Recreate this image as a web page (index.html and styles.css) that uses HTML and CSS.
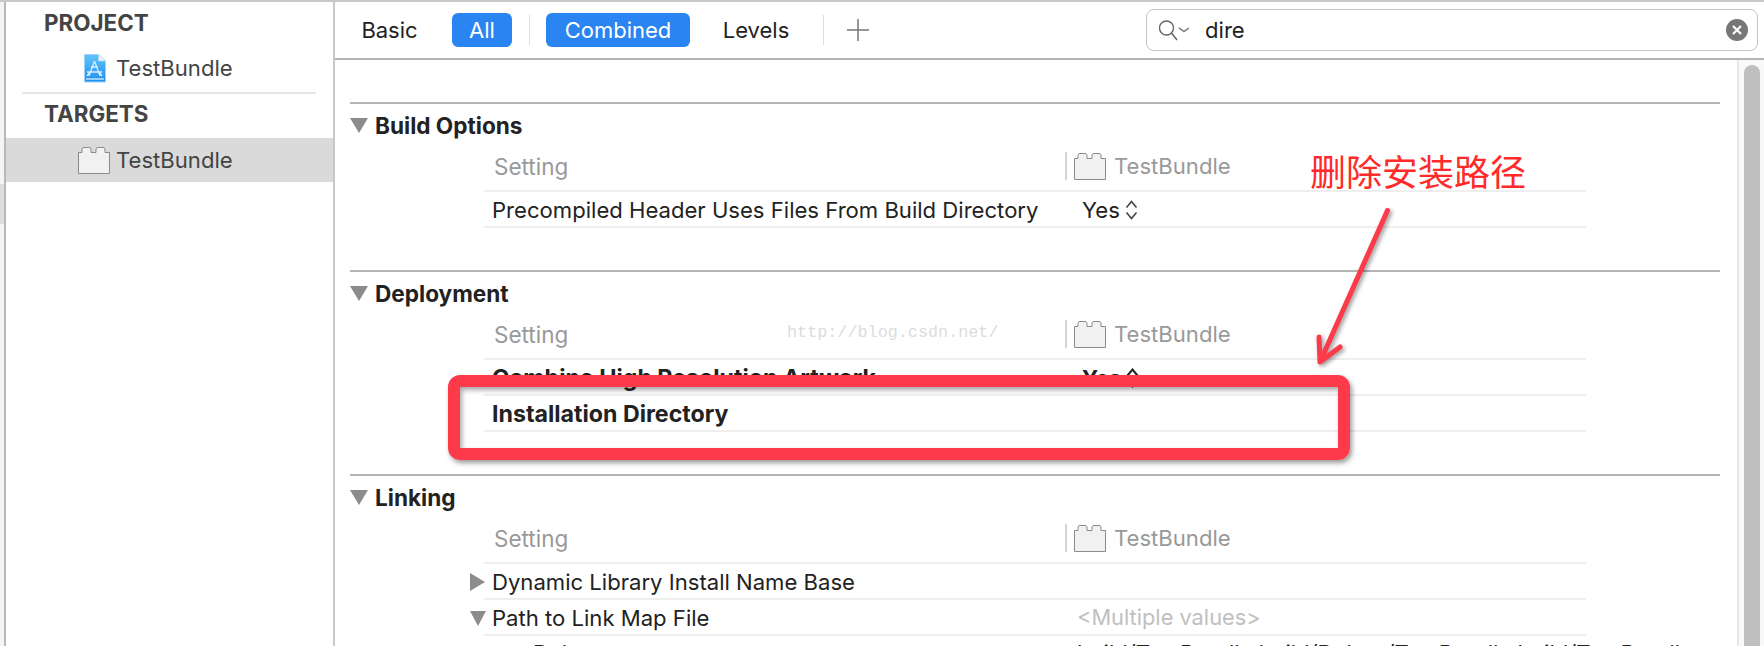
FILE: index.html
```html
<!DOCTYPE html>
<html lang="en">
<head>
<meta charset="utf-8">
<title>Build Settings</title>
<link rel="stylesheet" href="styles.css">
</head>
<body>
<div class="window">
  <div class="strip"></div>
  <aside class="sidebar">
    <div class="side-head first">PROJECT</div>
    <div class="side-item project">
      <svg class="doc-icon" viewBox="0 0 23 29" width="23" height="29">
        <defs><linearGradient id="docfill" x1="0" y1="0" x2="0" y2="1"><stop offset="0" stop-color="#62c4fa"/><stop offset="1" stop-color="#1c8ff0"/></linearGradient></defs>
        <path d="M1.500 .5H15.500L22.500 7V28H1.500Z" fill="url(#docfill)" stroke="#9ed2f3"/>
        <path d="M15.500 .5V7H22.500Z" fill="#eef4f9" stroke="#b9d6ea" stroke-width=".6"/>
        <path d="M3 25H21" stroke="#e4f4ff" stroke-width="1.200"/>
        <path d="M11.500 7L6 22M11.500 7L17 22M4 18H19M8 13H15M4 22L7 18M19 22L16 18" stroke="#d6eeff" stroke-width="1.300" fill="none"/>
      </svg>
      <span>TestBundle</span>
    </div>
    <div class="side-sep"></div>
    <div class="side-head second">TARGETS</div>
    <div class="side-item selected">
      <svg class="brick" viewBox="0 0 32 27" width="32" height="27">
        <path d="M.5 26.500V5.500H4V2L5 .5H12L13 2V5.500H18V2L19 .5H26L27 2V5.500H31.500V26.500Z" fill="#f1f1f1" stroke="#8a8a8a"/>
      </svg>
      <span>TestBundle</span>
    </div>
  </aside>
  <main class="main">
    <header class="toolbar">
      <span class="tab basic">Basic</span>
      <span class="tab on all">All</span>
      <span class="tool-sep first-sep"></span>
      <span class="tab on combined">Combined</span>
      <span class="tab levels">Levels</span>
      <span class="tool-sep second-sep"></span>
      <svg class="plus" viewBox="0 0 22 22" width="22" height="22"><path d="M11 0V22M0 11H22" stroke="#777" stroke-width="1.500"/></svg>
      <div class="search">
        <svg class="lens" viewBox="0 0 30 21" width="30" height="21">
          <circle cx="7.500" cy="8" r="7" fill="none" stroke="#666" stroke-width="1.400"/>
          <path d="M12.500 13L18 20" stroke="#666" stroke-width="1.500"/>
          <path d="M20 8L25 11.500L30 8" stroke="#666" stroke-width="1.300" fill="none"/>
        </svg>
        <span class="query">dire</span>
        <svg class="clear" viewBox="0 0 22 22" width="22" height="22">
          <circle cx="11" cy="11" r="11" fill="#777"/>
          <path d="M7 7L15 15M15 7L7 15" stroke="#fff" stroke-width="2.200"/>
        </svg>
      </div>
    </header>
    <div class="body">
      <div class="content">
        <section class="group">
          <h2 class="group-title"><i class="tri down"></i>Build Options</h2>
          <div class="row head">
            <div class="name">Setting</div>
            <div class="col-target">
              <svg class="brick" viewBox="0 0 32 27" width="32" height="27"><path d="M.5 26.500V5.500H4V2L5 .5H12L13 2V5.500H18V2L19 .5H26L27 2V5.500H31.500V26.500Z" fill="#f1f1f1" stroke="#8a8a8a"/></svg>
              <span>TestBundle</span>
            </div>
          </div>
          <div class="row">
            <div class="name">Precompiled Header Uses Files From Build Directory</div>
            <div class="value">Yes<svg class="updown" viewBox="0 0 13 20" width="13" height="20"><path d="M1.500 7.500L6.500 1.500L11.500 7.500M1.500 12.500L6.500 18.500L11.500 12.500" fill="none" stroke="#444" stroke-width="1.600"/></svg></div>
          </div>
        </section>
        <section class="group">
          <h2 class="group-title"><i class="tri down"></i>Deployment</h2>
          <div class="row head">
            <div class="name">Setting</div>
            <div class="col-target">
              <svg class="brick" viewBox="0 0 32 27" width="32" height="27"><path d="M.5 26.500V5.500H4V2L5 .5H12L13 2V5.500H18V2L19 .5H26L27 2V5.500H31.500V26.500Z" fill="#f1f1f1" stroke="#8a8a8a"/></svg>
              <span>TestBundle</span>
            </div>
          </div>
          <div class="row strong">
            <div class="name">Combine High Resolution Artwork</div>
            <div class="value">Yes<svg class="updown" viewBox="0 0 13 20" width="13" height="20"><path d="M1.500 7.500L6.500 1.500L11.500 7.500M1.500 12.500L6.500 18.500L11.500 12.500" fill="none" stroke="#222" stroke-width="2"/></svg></div>
          </div>
          <div class="row strong">
            <div class="name">Installation Directory</div>
            <div class="value"></div>
          </div>
        </section>
        <section class="group">
          <h2 class="group-title"><i class="tri down"></i>Linking</h2>
          <div class="row head">
            <div class="name">Setting</div>
            <div class="col-target">
              <svg class="brick" viewBox="0 0 32 27" width="32" height="27"><path d="M.5 26.500V5.500H4V2L5 .5H12L13 2V5.500H18V2L19 .5H26L27 2V5.500H31.500V26.500Z" fill="#f1f1f1" stroke="#8a8a8a"/></svg>
              <span>TestBundle</span>
            </div>
          </div>
          <div class="row">
            <div class="name"><i class="tri right small"></i>Dynamic Library Install Name Base</div>
            <div class="value"></div>
          </div>
          <div class="row">
            <div class="name"><i class="tri down small"></i>Path to Link Map File</div>
            <div class="value muted">&lt;Multiple values&gt;</div>
          </div>
          <div class="row last">
            <div class="name sub">Debug</div>
            <div class="value plain">build/TestBundle.build/Debug/TestBundle.build/TestBundle</div>
          </div>
        </section>
      </div>
      <div class="scroll"><div class="thumb"></div></div>
    </div>
  </main>
</div>
<div class="watermark">http://blog.csdn.net/</div>
<div class="callout"></div>
<div class="note">删除安装路径</div>
<svg class="arrow" viewBox="0 0 90 170" width="90" height="170">
  <path d="M74.500 5.500L7 157M6 132L7 157L27 142" fill="none" stroke="#fc3a4a" stroke-width="5" stroke-linecap="round" stroke-linejoin="round"/>
</svg>
</body>
</html>
```
FILE: styles.css
```css
* { box-sizing: border-box; }
html, body { margin: 0; padding: 0; height: 646px; overflow: hidden; background: #fff; }
body { position: relative; font-family: Inter, Roboto, "Liberation Sans", sans-serif; font-size: 22.100px; color: #222; }

.window { display: flex; height: 646px; width: 1764px; border-top: 2px solid #c8c8c8; }
.strip { width: 6px; flex: none; border-right: 2px solid #b8b8b8; background: linear-gradient(#f5f5f5 182px, #dedede 182px, #dedede 222px, #f5f5f5 222px); }

.sidebar { width: 329px; flex: none; border-right: 2px solid #c8c8c8; color: #444; }
.side-head { font-weight: 700; font-size: 22.400px; padding-left: 38px; display: flex; align-items: center; }
.side-head.first { height: 42px; padding-bottom: 2px; }
.side-head.second { height: 44px; padding-bottom: 6px; }
.side-item { display: flex; align-items: center; font-size: 22.100px; }
.side-item.project { height: 48px; padding-left: 77px; gap: 10px; }
.side-item.selected { height: 44px; background: #dadada; padding-left: 72px; gap: 6px; }
.side-sep { height: 2px; margin: 0 17px 0 16px; background: #e6e6e6; }

.main { flex: 1; min-width: 0; display: flex; flex-direction: column; }
.toolbar { height: 58px; flex: none; display: flex; align-items: center; border-bottom: 2px solid #b4b4b4; padding-left: 27px; }
.tab { font-size: 22px; height: 34px; display: flex; align-items: center; justify-content: center; border-radius: 6px; }
.tab.on { background: #2a84f2; color: #fff; }
.basic { width: 55px; }
.all { width: 60px; margin-left: 35px; }
.first-sep { margin-left: 17px; }
.combined { width: 144px; margin-left: 16px; }
.levels { width: 66px; margin-left: 33px; }
.second-sep { margin-left: 34px; }
.tool-sep { width: 1px; height: 30px; background: #ddd; }
.plus { margin-left: 23px; }
.search { margin-left: 277px; width: 612px; height: 42px; border: 1.500px solid #c4c4c4; border-radius: 8px; display: flex; align-items: center; padding: 0 9px 0 12px; }
.lens { flex: none; }
.query { margin-left: 16px; flex: 1; }
.clear { flex: none; }

.body { flex: 1; min-height: 0; display: flex; }
.content { flex: none; width: 1402px; padding: 42px 0 0 15px; overflow: hidden; }
.group { width: 1370px; border-top: 2px solid #b4b4b4; padding-bottom: 42px; }
.group-title { margin: 0; height: 42px; display: flex; align-items: center; font-size: 22.600px; font-weight: 700; color: #222; }
.tri { display: block; flex: none; width: 0; height: 0; }
.tri.down { border-left: 9px solid transparent; border-right: 9px solid transparent; border-top: 15px solid #8c8c8c; margin-right: 7px; }
.tri.small { position: absolute; }
.tri.right.small { border-top: 9px solid transparent; border-bottom: 9px solid transparent; border-left: 15px solid #8c8c8c; margin-left: -22px; }
.tri.down.small { border-left-width: 8px; border-right-width: 8px; margin-left: -22px; margin-right: 0; }

.row { margin-left: 134px; width: 1102px; height: 36px; border-bottom: 2px solid #eeeeee; display: flex; align-items: center; padding-top: 2px; }
.row.head { height: 46px; color: #999; padding-top: 0; }
.row .name { width: 581px; flex: none; padding-left: 8px; white-space: nowrap; display: flex; align-items: center; position: relative; }
.row.head .name { padding-left: 10px; padding-bottom: 4px; font-size: 22.500px; }
.row.strong { font-weight: 700; padding-top: 1px; }
.row.strong .name { font-size: 23.200px; }
.col-target { display: flex; align-items: center; height: 28px; border-left: 2px solid #d4d4d4; padding-left: 7px; gap: 8px; margin-bottom: 4px; }
.value { padding-left: 17px; display: flex; align-items: center; gap: 5px; white-space: nowrap; }
.value.muted { color: #c0c0c0; padding-left: 12px; padding-bottom: 3px; font-size: 21.800px; }
.value.plain { padding-left: 12px; }
.row .name.sub { padding-left: 49px; }
.row.last { border-bottom: 0; padding-top: 0; padding-bottom: 3px; }

.scroll { flex: none; width: 27px; border-left: 2px solid #e6e6e6; background: #f9f9f9; padding: 5px 4px 0 5px; }
.thumb { height: 100%; width: 16px; background: #c0c0c0; border-radius: 8px 8px 0 0; }

.watermark { position: absolute; left: 787px; top: 323px; font-family: "Liberation Mono", monospace; font-size: 16.800px; color: #dcdcdc; }
.callout { position: absolute; left: 448px; top: 375px; width: 902px; height: 85px; border: 12px solid #fc3a4a; border-radius: 12px; box-shadow: 2px 3px 5px rgba(0,0,0,.4), inset 2px 3px 5px rgba(0,0,0,.35); }
.note { position: absolute; left: 1310px; top: 147px; font-family: "Noto Sans CJK SC", sans-serif; font-size: 36px; line-height: 46px; color: #ff2a2a; }
.arrow { position: absolute; left: 1313px; top: 205px; filter: drop-shadow(2px 2px 2px rgba(0,0,0,.4)); }
```
